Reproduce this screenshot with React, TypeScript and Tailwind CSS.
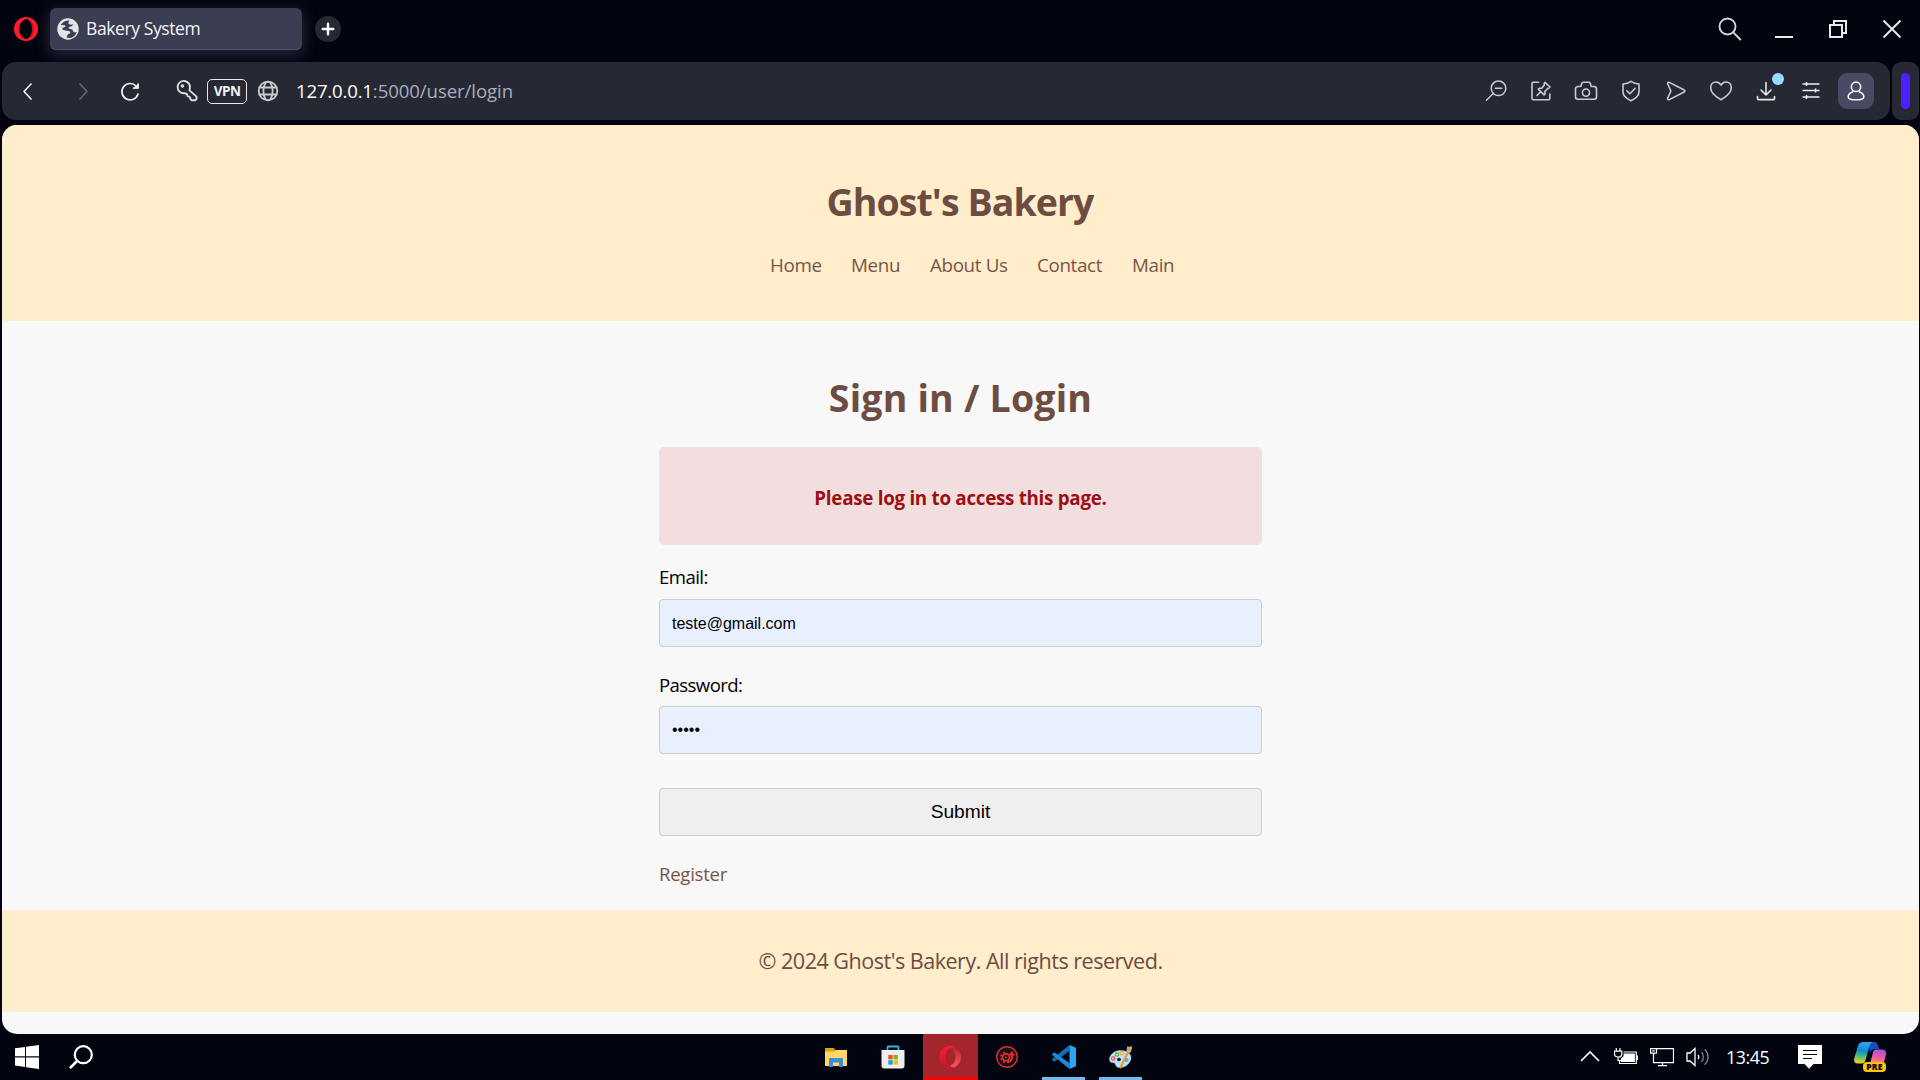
import type { ReactNode } from 'react';

type GlyphProps = { children: ReactNode; className?: string; stroke?: number; size?: string };

function Glyph({ children, className = 'text-[#c9cbcf]', stroke = 1.5, size = 'size-6' }: GlyphProps) {
  return (
    <svg viewBox="0 0 24 24" fill="none" stroke="currentColor" strokeWidth={stroke} strokeLinecap="round" strokeLinejoin="round" className={`${size} ${className} shrink-0`}>
      {children}
    </svg>
  );
}

function TabStrip() {
  return (
    <div className="flex h-[62px] shrink-0 items-center pb-1 pl-3.5">
      <svg viewBox="0 0 24 24" className="size-6 shrink-0">
        <path fillRule="evenodd" fill="#ff1b2d" d="M12 0C5.2 0 0 5.200 0 12s5.200 12 12 12 12-5.200 12-12S18.800 0 12 0Zm0.300 2.200c3.300 0 5.200 4.400 5.200 9.800s-1.900 9.800-5.200 9.800S5.200 17.500 5.200 12 9 2.200 12.300 2.200Z" />
        <path fill="#02040f" d="M12.300 2.200c3.300 0 6.300 4.500 6.300 9.800s-3 9.800-6.300 9.800Z" />
        <path fill="#c3131f" d="M12.300 2.200c5 0 7.800 4.500 7.800 9.800s-2.800 9.800-7.800 9.800c3.300-.8 5.700-4.400 5.700-9.800s-2.400-9-5.700-9.800Z" />
      </svg>
      <div className="ml-3 flex h-[42px] w-[252px] items-center rounded-md border-b border-[#50546f] bg-[#3b3d53] pl-[7px] shadow-[0_4px_14px_2px_rgba(80,82,105,0.42)]">
        <svg viewBox="0 0 24 24" className="size-[22px] shrink-0">
          <circle cx="12" cy="12" r="11.700" fill="#e3e4e8" />
          <path fill="#3b3d53" d="M13.500 2.800c-4-.2-7 1.400-9.500 4.700l4.500.3 1 1.600-2.900 1.200c-1 .5-1 2 0 2.400l3.900 1 2.500.2c1.200.3 1.700 1.200 1.500 2.400l-2.500 1.200-1.800 3.600c5.300 1.300 9.600-.8 11.300-5.900h-3.300l-1.500-3-3.500-.8-.7-1.500 3.500-1.200 2-2.200-3.500.6-2.300-1.500Z" />
        </svg>
        <span className="ml-[7px] text-[17.500px] tracking-[-0.400px] whitespace-nowrap text-[#f4f4f6]">Bakery System</span>
      </div>
      <div className="ml-[13px] flex size-[26px] items-center justify-center rounded-full bg-[#262934]">
        <Glyph size="size-3.5" className="text-white" stroke={4.2}><path d="M12 3v18M3 12h18" /></Glyph>
      </div>
      <div className="ml-auto flex items-center pr-[19px] text-[#e7e8ec]">
        <Glyph className="mr-[33px] text-[#d5d6da]" stroke={1.900}><circle cx="9.500" cy="9.500" r="8" /><path d="m15.300 15.300 7 7.200" /></Glyph>
        <svg viewBox="0 0 18 18" className="mr-9 size-[18px]"><path d="M0 17h18" stroke="currentColor" strokeWidth="2" /></svg>
        <svg viewBox="0 0 18 18" className="mr-9 size-[18px]" fill="none" stroke="currentColor" strokeWidth="2"><path d="M1 5h12v12H1ZM5 5V1h12v12h-4" /></svg>
        <svg viewBox="0 0 18 18" className="size-[18px]"><path d="m.5.5 17 17M17.500.5l-17 17" stroke="currentColor" strokeWidth="2" /></svg>
      </div>
    </div>
  );
}

function Cell({ children }: { children: ReactNode }) {
  return <div className="relative flex w-[45px] items-center justify-center">{children}</div>;
}

function AddressBar() {
  return (
    <div className="flex h-[58px] shrink-0 gap-0.5 pr-px pl-[2px]">
      <div className="flex flex-1 items-center rounded-[14px] bg-[#262934] pr-[12px] pl-[13px]">
        <Glyph className="text-white" stroke={1.500}><path d="m16 5-7 7.500 7 7.500" strokeLinecap="square" /></Glyph>
        <Glyph className="ml-[32px] text-[#676a75]" stroke={1.500}><path d="m9 5 7 7.500L9 20" strokeLinecap="square" /></Glyph>
        <Glyph className="ml-[23px] text-[#f0f0f2]" stroke={1.700}>
          <path d="M18.200 7.200A8.200 8.200 0 1 0 20 15" />
          <path d="M15 9.500h5.500V4.500Z" fill="currentColor" stroke="none" />
          <path d="M20 5v4h-4.500" />
        </Glyph>
        <Glyph className="ml-[33px] text-[#dcdde1]" stroke={1.900}>
          <path d="M14.800 9.600A6.200 6.200 0 1 0 9.200 14.300l2.600.4.700 2.400 2.200.7.700 2.200 1.200 1.200h3.900l1-1v-2.600l-7-6.200Z" />
          <circle cx="7.500" cy="7" r="1.800" fill="currentColor" stroke="none" />
        </Glyph>
        <div className="ml-2 flex h-[25px] w-10 items-center justify-center rounded-[5px] border border-[#e8e8ea] pt-0.5 text-[13.500px] leading-none font-bold tracking-[-0.500px] text-[#f2f2f4]">VPN</div>
        <Glyph className="ml-[9px] text-[#c9cbcf]" stroke={1.800}>
          <circle cx="12" cy="12" r="9.300" /><ellipse cx="12" cy="12" rx="4.600" ry="9.300" /><path d="M3.500 8.500h17M3.500 15.500h17" />
        </Glyph>
        <div className="ml-[16px] flex text-[18.600px] whitespace-nowrap">
          <span className="tracking-[-0.180px] text-white">127.0.0.1</span>
          <span className="tracking-[-0.080px] text-[#a5afbc]">:5000/user/login</span>
        </div>
        <div className="ml-auto flex h-full items-center">
          <Cell><Glyph stroke={1.500}><circle cx="14.500" cy="9.300" r="7.300" /><path d="m9.200 14.500-6.700 6.700M11.300 9.300h6.500" /></Glyph></Cell>
          <Cell><Glyph stroke={1.600}><path d="M9.500 3.300H4.300a1.300 1.300 0 0 0-1.300 1.300v14.800a1.300 1.300 0 0 0 1.300 1.300h15.200a1.300 1.300 0 0 0 1.300-1.300V15" /><path d="m16 3.300 5 4.700-1.300 1.300-.8-.1-3 3.300.2 2.500-1 .8-5.900-5.600 1-1 2.600.1 2.600-3.500-.3-1.200ZM11.700 12.700 8 16.500" /></Glyph></Cell>
          <Cell><Glyph stroke={1.600}><path d="M4 7.500h2.800l1-3.200a1.500 1.500 0 0 1 1.400-1h5.600a1.500 1.500 0 0 1 1.400 1l1 3.200H20a2.500 2.500 0 0 1 2.500 2.500v7.800a2.500 2.500 0 0 1-2.500 2.500H4a2.500 2.500 0 0 1-2.500-2.500V10A2.500 2.500 0 0 1 4 7.500Z" /><circle cx="12" cy="13.600" r="3.600" /></Glyph></Cell>
          <Cell><Glyph stroke={1.600}><path d="M12 2.300c2.300 1.700 4.900 2.500 8 2.700v7.700c0 4-3.600 7-8 9-4.400-2-8-5-8-9V5c3.100-.2 5.700-1 8-2.700Z" /><path d="m7.800 11.700 3 3 5.400-5.400" /></Glyph></Cell>
          <Cell><Glyph stroke={1.600}><path d="M5.300 3.400 20.200 11a1.100 1.100 0 0 1 0 2L5.300 20.600a1.200 1.200 0 0 1-1.600-1.600l3.200-7-3.200-7a1.200 1.200 0 0 1 1.600-1.600Z" /></Glyph></Cell>
          <Cell><Glyph stroke={1.600}><path d="M12 6c1.200-1.900 2.900-3 5-3 3.200 0 5.300 2.500 5.300 5.700 0 5-5.700 9.400-10.300 12.100C7.400 18.100 1.700 13.700 1.700 8.700 1.700 5.500 3.800 3 7 3c2.100 0 3.800 1.100 5 3Z" /></Glyph></Cell>
          <Cell>
            <Glyph className="text-[#e6e7ea]" stroke={1.600}><path d="M12 3.500v12M7 11l5 5 5-5M3.500 17.500v2.300a.8.8 0 0 0 .8.800h15.400a.8.8 0 0 0 .8-.800v-2.300" /></Glyph>
            <span className="absolute top-[-6px] left-[29px] size-3 rounded-full bg-[#96dcff]" />
          </Cell>
          <Cell><Glyph className="text-[#f0f0f2]" stroke={1.500}><path d="M3.500 5h17M3.500 11.500h17M3.500 18h17M7.500 3v4M16.500 9.500v4M7.500 16v4" strokeLinecap="butt" /></Glyph></Cell>
          <Cell>
            <div className="flex size-9 items-center justify-center rounded-[9px] bg-[#484a63]">
              <Glyph className="text-[#f2f2f5]" stroke={1.600}><circle cx="12" cy="7.800" r="4.700" /><path d="M8.500 12.900c-2.600.8-4.300 2.900-4.300 5 0 2.300 2.300 2.800 7.800 2.800s7.800-.5 7.800-2.800c0-2.100-1.700-4.200-4.300-5" /></Glyph>
            </div>
          </Cell>
        </div>
      </div>
      <div className="flex w-[27px] items-center justify-center rounded-[9px] bg-[#262934]">
        <div className="h-9 w-[9px] rounded-full bg-[#4c20ff]" />
      </div>
    </div>
  );
}

function BakeryPage() {
  return (
    <div className="mt-[5px] mr-px ml-[2px] flex h-[909px] shrink-0 flex-col overflow-hidden rounded-[15px] bg-[#f8f8f8]">
      <header className="h-[196px] shrink-0 bg-[#ffedcc] pt-[51px]">
        <h1 className="h-[52px] pr-px text-center text-[37.500px] leading-[52px] font-bold tracking-[-0.930px] text-[#6d4c41]">Ghost's Bakery</h1>
        <nav className="mt-[24px] flex pl-[768px] text-[18.800px] leading-[26px] tracking-[-0.350px] whitespace-nowrap text-[#795548]">
          <a className="w-[81px]">Home</a>
          <a className="w-[79px]">Menu</a>
          <a className="w-[107px]">About Us</a>
          <a className="w-[95px]">Contact</a>
          <a>Main</a>
        </nav>
      </header>
      <main className="mx-auto flex h-[589px] w-[603px] shrink-0 flex-col pt-[51px] text-[18.600px] leading-[26px]">
        <h2 className="h-[52px] text-center text-[37.500px] leading-[52px] font-bold tracking-[0.200px] text-[#6d4c41]">Sign in / Login</h2>
        <div className="mt-[23px] flex h-[98px] items-center justify-center rounded-[5px] bg-[#f2dede] pt-[3px] text-[18.800px] font-bold tracking-[-0.280px] text-[#9c1014]">Please log in to access this page.</div>
        <label className="mt-[19px] tracking-[-0.550px] text-black">Email:</label>
        <div className="mt-[9px] flex h-12 items-center rounded border border-[#cccccc] bg-[#e8f0fe] px-3 pt-0.5 font-['Liberation_Sans',Arial,sans-serif] text-base text-black">teste@gmail.com</div>
        <label className="mt-[25px] tracking-[-0.600px] text-black">Password:</label>
        <div className="mt-2 flex h-12 items-center rounded border border-[#cccccc] bg-[#e8f0fe] px-3 font-['Liberation_Sans',Arial,sans-serif] text-base text-black">•••••</div>
        <button className="mt-[34px] h-12 rounded border border-[#cccccc] bg-[#efefef] font-['Liberation_Sans',Arial,sans-serif] text-[19.200px] text-black">Submit</button>
        <a className="mt-[25px] tracking-[-0.280px] text-[#795548]">Register</a>
      </main>
      <footer className="flex h-[102px] shrink-0 items-center justify-center bg-[#ffedcc] pt-px text-[21.600px] tracking-[-0.520px] text-[#6d4c41]">© 2024 Ghost's Bakery. All rights reserved.</footer>
    </div>
  );
}

function TaskCell({ children, tone = 'w-[57px]' }: { children: ReactNode; tone?: string }) {
  return <div className={`flex h-full items-center justify-center ${tone}`}>{children}</div>;
}

function RunningCell({ children }: { children: ReactNode }) {
  return (
    <div className="flex h-full w-[57px] flex-col items-center">
      <div className="flex flex-1 items-center pt-[3px]">{children}</div>
      <div className="h-[3px] w-[43px] bg-[#76b9ed]" />
    </div>
  );
}

function Taskbar() {
  return (
    <div className="grid h-[46px] shrink-0 grid-cols-[808px_341px_1fr] items-center">
      <div className="flex items-center gap-[30px] pl-[15px]">
        <svg viewBox="0 0 24 24" className="size-6" fill="#ffffff"><path d="M0 3.300 10 1.900v9.300H0ZM11 1.700 24 0v11.200H11ZM0 12.500h10V22L0 20.600ZM11 12.500h13V24l-13-1.800Z" /></svg>
        <svg viewBox="0 0 24 24" className="size-6" fill="none" stroke="#ffffff" strokeWidth="2.200"><circle cx="14.300" cy="9.700" r="8.500" /><path d="m8.500 15.500-7.600 7.700" strokeWidth="2.600" /></svg>
      </div>
      <div className="flex h-[46px]">
        <TaskCell>
          <svg viewBox="0 0 24 24" className="size-6">
            <path fill="#e0a008" d="M1 3h8.500l2 2-2 3H1Z" />
            <path fill="#ffd667" d="M1 6.500h9L11.500 5H23v16H1Z" />
            <path fill="#3a8bd8" d="M6.300 13h11.500a1.200 1.200 0 0 1 1.200 1.200V22h-4v-4.500H9V22H5v-7.800A1.200 1.200 0 0 1 6.300 13Z" />
          </svg>
        </TaskCell>
        <TaskCell>
          <svg viewBox="0 0 24 24" className="size-6">
            <path fill="none" stroke="#2db4f0" strokeWidth="1.800" d="M6.500 6V2.500a1 1 0 0 1 1-1h9a1 1 0 0 1 1 1V6" />
            <path fill="#eeeeef" d="M.5 5h23v15.800a2.700 2.700 0 0 1-2.700 2.700H3.200A2.700 2.700 0 0 1 .5 20.800Z" />
            <path fill="#f25022" d="M7.300 10h4.400v4.400H7.300Z" /><path fill="#7fba00" d="M12.500 10h4.400v4.400h-4.400Z" />
            <path fill="#00a4ef" d="M7.300 15.200h4.400v4.400H7.300Z" /><path fill="#ffb900" d="M12.500 15.200h4.400v4.400h-4.400Z" />
          </svg>
        </TaskCell>
        <TaskCell tone="mx-px w-[55px] border-b-[3px] border-[#ff0000] bg-[#a4262c] pt-[3px]">
          <svg viewBox="0 0 24 24" className="size-6">
            <defs>
              <linearGradient id="operaLeft" x1="0" y1="0" x2="0" y2="1"><stop offset="0" stopColor="#ff1b2d" /><stop offset="1" stopColor="#c3182a" /></linearGradient>
              <linearGradient id="operaRight" x1="0" y1="0" x2="0" y2="1"><stop offset="0" stopColor="#c01a26" /><stop offset="1" stopColor="#ff5a5a" /></linearGradient>
            </defs>
            <path fill="url(#operaRight)" fillRule="evenodd" d="M12 1c6.500 0 11 5 11 11s-4.500 11-11 11c-2 0-3.500-.8-4.500-2 5 1.500 10-2.500 10-9s-5-10.500-10-9c1-1.200 2.500-2 4.500-2Z" />
            <path fill="url(#operaLeft)" d="M12 1a11 11 0 1 0 0 22c2 0 3.500-.4 4.800-1.200C11 22.500 7.300 18 7.300 12S11 1.500 16.800 2.200C15.500 1.400 14 1 12 1Z" />
          </svg>
        </TaskCell>
        <TaskCell>
          <svg viewBox="0 0 24 24" className="size-6" fill="none" stroke="#e22a30">
            <circle cx="12" cy="12" r="10.300" fill="#101512" strokeWidth="1.400" />
            <circle cx="11" cy="12.300" r="3.500" strokeWidth="1.900" />
            <path strokeWidth="1.800" strokeDasharray="1.900 2" d="M13.700 16.800A5.200 5.200 0 1 1 11.500 7.100" />
            <circle cx="11" cy="12.300" r="1" fill="#e22a30" stroke="none" />
            <path strokeWidth="2.200" d="M13 16.800c3.300-.5 4.600-3.500 4-7" /><path fill="#e22a30" stroke="none" d="m13 10.500 4-4.500 3.300 4.500Z" />
          </svg>
        </TaskCell>
        <RunningCell>
          <svg viewBox="0 0 24 24" className="size-6">
            <path fill="#0f6fb5" d="m1.500 16.200-1.300-1.100a.7.700 0 0 1 0-1L17.500 0v6L3 16.200a1.200 1.200 0 0 1-1.500 0Z" />
            <path fill="#1b8ad3" d="m1.500 7.800-1.300 1.100a.7.700 0 0 0 0 1L17.500 24v-6L3 7.800a1.200 1.200 0 0 0-1.500 0Z" />
            <path fill="#2ba6f5" d="M17.500 0 24 2.700v18.600L17.500 24Z" />
          </svg>
        </RunningCell>
        <RunningCell>
          <svg viewBox="0 0 24 24" className="size-6">
            <path fill="#c3e1f2" stroke="#8bbcd9" strokeWidth=".6" d="M12.500 5.500C5.500 5 .3 10 .5 14.500c.2 3.500 3 3 4.500 3.300 2 .5.800 4.300 5 4.700 6 .5 11.500-4 12-9.500.3-4-4-7.200-9.500-7.500Z" />
            <ellipse cx="10" cy="14.500" rx="2" ry="1.800" fill="#06243c" />
            <g fill="#ffffff" strokeWidth="1.300"><circle cx="4.200" cy="13.500" r="1.600" stroke="#dc5240" /><circle cx="8" cy="9.600" r="1.600" stroke="#58a93c" /><circle cx="12.700" cy="8.300" r="1.600" stroke="#e2a82c" /></g>
            <circle cx="17.500" cy="15" r="2" fill="#65a7d2" />
            <path stroke="#ec9230" strokeWidth="2" strokeLinecap="round" d="m18.500 8-7 14.500" />
            <path fill="#cfa474" d="m17.300 6.500 1-5.200 2.200.7L22.500.5l.5 3-1.200 3.800-3 1.500Z" />
          </svg>
        </RunningCell>
      </div>
      <div className="flex items-center pl-[429px]">
        <svg viewBox="0 0 24 24" className="size-6" fill="none" stroke="#ffffff" strokeWidth="1.600"><path d="m3 16 9-9 9 9" /></svg>
        <svg viewBox="0 0 24 24" className="ml-3 size-6" fill="none" stroke="#ffffff" strokeWidth="1.200">
          <path d="M2.300 3v3M6 3v3M.5 6.200h7.300v2.500C7.800 11 6 12 4 12S.5 11 .5 8.700ZM4 12v3.500h3M9.500 7h12.800v11.500H5.500V15" /><path fill="#ffffff" stroke="none" d="M9.500 8.500h11.400V17H7v-3.500l2.500-2.300ZM23 10.500h1.200v4.500H23Z" />
        </svg>
        <svg viewBox="0 0 24 24" className="ml-3 size-6" fill="none" stroke="#ffffff" strokeWidth="1.200"><path d="M6.500 3.600h17v14H3.500V11M12.500 17.600v3M8 20.600h9M.6 3.600h5.900v4.500H.6ZM3.500 8v4M2.200 5.800h2.600" /></svg>
        <svg viewBox="0 0 24 24" className="ml-3 size-6" fill="none" stroke="#ffffff" strokeWidth="1.300"><path d="M1 8h3l5-4.500v17L4 16H1Z" /><path d="M12 10c1 1.200 1 2.800 0 4" /><path stroke="#7b7d86" d="M15.500 7.200c2.500 2.700 2.500 6.800 0 9.600M18.700 4.300c4.500 4.500 4.500 11 0 15.400" /></svg>
        <span className="ml-4 w-[42px] pt-px text-[17.800px] tracking-[-0.400px] whitespace-nowrap text-white">13:45</span>
        <svg viewBox="0 0 24 24" className="ml-[30px] size-6"><path fill="#ffffff" d="M0 0h24v19h-8.500L11 23.700 6.500 19H0Z" /><path stroke="#050611" strokeWidth="1.200" d="M5 5.500h14M5 9.500h14M5 13.500h9" /></svg>
        <div className="relative ml-8 h-[30px] w-8">
          <svg viewBox="0 0 32 30" className="h-[30px] w-8">
            <defs>
              <linearGradient id="copilotLeft" x1="0.300" y1="0" x2="0.200" y2="1"><stop offset="0" stopColor="#2aa8f0" /><stop offset="0.400" stopColor="#1188d8" /><stop offset="0.650" stopColor="#4bbf76" /><stop offset="1" stopColor="#ffd21c" /></linearGradient>
              <linearGradient id="copilotRight" x1="0.600" y1="0" x2="0.400" y2="1"><stop offset="0" stopColor="#a653e8" /><stop offset="0.500" stopColor="#e75aa0" /><stop offset="1" stopColor="#ff8a5c" /></linearGradient>
            </defs>
            <path fill="#1650c0" d="M15 0h5c2.500 0 3.500 1.500 4.200 4l.9 3H21c-2.500 0-4 1-5 4Z" />
            <path fill="url(#copilotLeft)" d="M9 0h10c-2 .5-2.800 2-3.500 4.500l-3.800 13c-.7 2.500-1.700 4-4.200 4H4c-3.500 0-4.500-2.500-3.700-5.500L4 4C4.800 1.500 6.500 0 9 0Z" />
            <path fill="url(#copilotRight)" d="M21.500 7.500H28c3 0 4.800 2 4 5L29.500 22H16l3-11.500c.5-2 1.200-3 2.500-3Z" />
          </svg>
          <span className="absolute right-0 bottom-0 flex h-[10px] w-[23px] items-center justify-center rounded-sm bg-[#ffc40c] text-[8.500px] leading-none font-extrabold tracking-[0.300px] text-black">PRE</span>
        </div>
      </div>
    </div>
  );
}

export default function App() {
  return (
    <div className="flex h-[1080px] w-[1920px] flex-col overflow-hidden bg-[#02040f] font-['Open_Sans','Noto_Sans',sans-serif]">
      <TabStrip />
      <AddressBar />
      <BakeryPage />
      <Taskbar />
    </div>
  );
}
